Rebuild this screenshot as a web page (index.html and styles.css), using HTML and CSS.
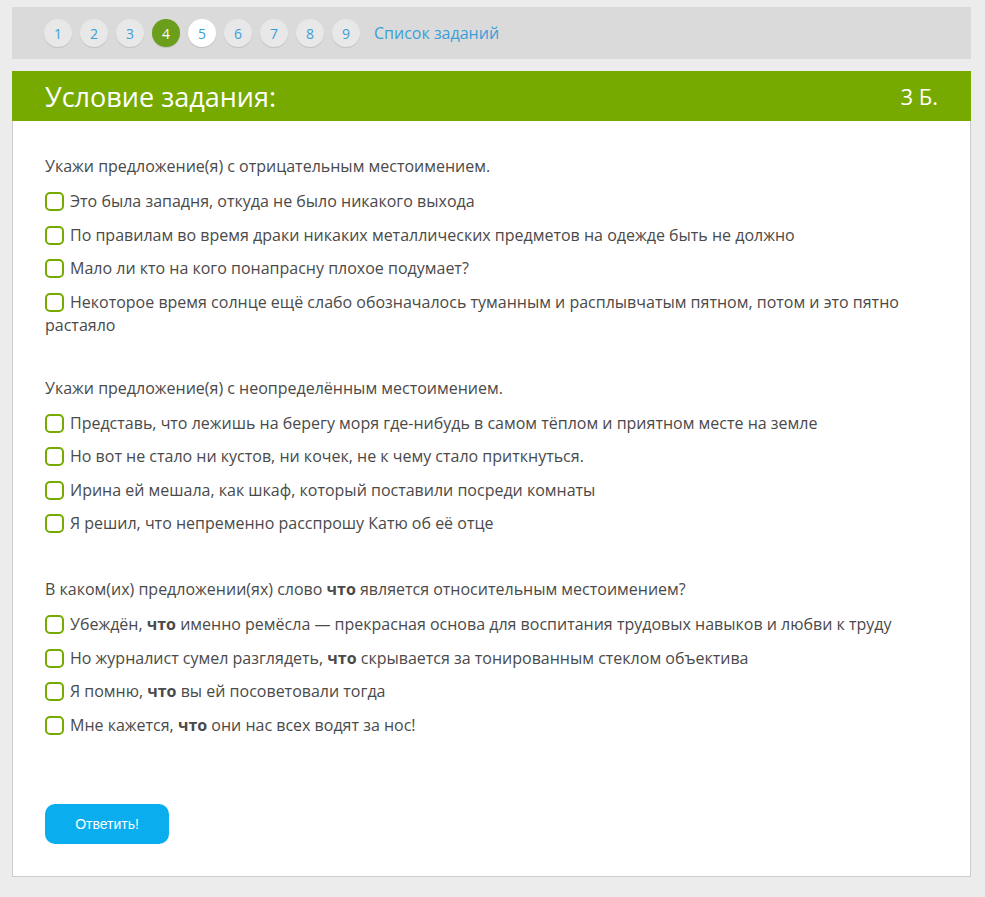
FILE: index.html
```html
<!DOCTYPE html>
<html lang="ru">

<head>
    <meta charset="UTF-8">
    <meta name="viewport" content="width=device-width, initial-scale=1.0">
    <title>Условие задания</title>
    <link rel="stylesheet" href="styles.css">
</head>

<body>
    <div class="page">
        <!-- навигация по заданиям -->
        <div class="tasks-nav">
            <a class="num">1</a>
            <a class="num">2</a>
            <a class="num">3</a>
            <a class="num active">4</a>
            <a class="num current">5</a>
            <a class="num">6</a>
            <a class="num">7</a>
            <a class="num">8</a>
            <a class="num">9</a>
            <a class="list-link">Список заданий</a>
        </div>

        <div class="task">
            <div class="task-head">
                <span class="task-title">Условие задания:</span>
                <span class="task-points">3 Б.</span>
            </div>

            <div class="task-body">
                <div class="question">
                    <p class="prompt">Укажи предложение(я) с отрицательным местоимением.</p>
                    <label class="option"><span class="box"></span>Это была западня, откуда не было никакого выхода</label>
                    <label class="option"><span class="box"></span>По правилам во время драки никаких металлических предметов на одежде быть не должно</label>
                    <label class="option"><span class="box"></span>Мало ли кто на кого понапрасну плохое подумает?</label>
                    <label class="option"><span class="box"></span>Некоторое время солнце ещё слабо обозначалось туманным и расплывчатым пятном, потом и это пятно растаяло</label>
                </div>

                <div class="question">
                    <p class="prompt">Укажи предложение(я) с неопределённым местоимением.</p>
                    <label class="option"><span class="box"></span>Представь, что лежишь на берегу моря где-нибудь в самом тёплом и приятном месте на земле</label>
                    <label class="option"><span class="box"></span>Но вот не стало ни кустов, ни кочек, не к чему стало приткнуться.</label>
                    <label class="option"><span class="box"></span>Ирина ей мешала, как шкаф, который поставили посреди комнаты</label>
                    <label class="option"><span class="box"></span>Я решил, что непременно расспрошу Катю об её отце</label>
                </div>

                <div class="question">
                    <p class="prompt">В каком(их) предложении(ях) слово <b>что</b> является относительным местоимением?</p>
                    <label class="option"><span class="box"></span>Убеждён, <b>что</b> именно ремёсла — прекрасная основа для воспитания трудовых навыков и любви к труду</label>
                    <label class="option"><span class="box"></span>Но журналист сумел разглядеть, <b>что</b> скрывается за тонированным стеклом объектива</label>
                    <label class="option"><span class="box"></span>Я помню, <b>что</b> вы ей посоветовали тогда</label>
                    <label class="option"><span class="box"></span>Мне кажется, <b>что</b> они нас всех водят за нос!</label>
                </div>

                <button class="answer">Ответить!</button>
            </div>
        </div>
    </div>
</body>

</html>
```

FILE: styles.css
```css
body {
    margin: 0;
    background-color: #ececec;
    font-family: 'Open Sans', 'Noto Sans', sans-serif;
    color: #4a4a4a;
}

.page {
    width: 959px;
    padding: 7px 0 0 12px;
}

.tasks-nav {
    height: 52px;
    background-color: #dadada;
    display: flex;
    align-items: center;
    padding-left: 32px;
    gap: 8px;
}

.num {
    width: 28px;
    height: 28px;
    border-radius: 50%;
    background-color: #e8e8e8;
    box-shadow: 0 1px 1px rgba(0, 0, 0, 0.12);
    color: #3a9fd8;
    font-size: 14px;
    display: flex;
    align-items: center;
    justify-content: center;
}

.num.active {
    background-color: #6b9e1a;
    color: #fff;
}

.num.current {
    background-color: #fff;
}

.list-link {
    color: #3a9fd8;
    font-size: 16px;
    margin-left: 6px;
}

.task {
    margin-top: 12px;
    background-color: #fff;
    border: 1px solid #cccccc;
    border-top: none;
}

.task-head {
    height: 50px;
    margin: 0 -1px;
    background-color: #76aa00;
    color: #fff;
    display: flex;
    align-items: center;
    justify-content: space-between;
    padding: 0 33px 0 33px;
}

.task-title {
    font-size: 27px;
}

.task-points {
    font-size: 22px;
}

.task-body {
    padding: 34px 32px 32px;
}

.question {
    margin-bottom: 43px;
}

.question:first-child {
    margin-bottom: 40px;
}

.prompt {
    margin: 0 0 12px;
    font-size: 16px;
    line-height: 23px;
}

.option {
    display: block;
    font-size: 16px;
    line-height: 23px;
    margin-bottom: 10.5px;
}

.box {
    display: inline-block;
    width: 15px;
    height: 15px;
    border: 2px solid #76aa00;
    border-radius: 5px;
    vertical-align: -4px;
    margin-right: 6px;
}

.answer {
    margin-top: 24px;
    width: 124px;
    height: 40px;
    border: none;
    border-radius: 10px;
    background-color: #0aaeee;
    color: #fff;
    font-family: 'Liberation Sans', Arial, sans-serif;
    font-size: 14px;
}
```
